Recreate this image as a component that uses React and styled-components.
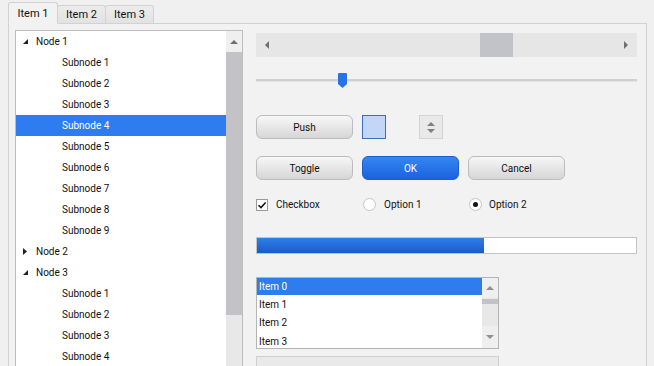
import styled, { createGlobalStyle } from "styled-components";

const GlobalStyle = createGlobalStyle`
  html, body { margin: 0; padding: 0; }
  body {
    font-family: Roboto, "Noto Sans", sans-serif;
    font-size: 10px;
    color: #111;
    background: #f0f0f0;
  }
`;

const Window = styled.div`
  width: 654px;
  height: 366px;
  overflow: hidden;
  background: #f0f0f0;
  padding: 2px 0 0 8px;
  box-sizing: border-box;
`;

const TabBar = styled.div`
  display: flex;
  align-items: flex-end;
  height: 21px;
  position: relative;
  z-index: 1;
`;

const Tab = styled.div`
  height: ${(p) => (p.$active ? "22px" : "18px")};
  width: ${(p) => p.$w}px;
  display: flex;
  align-items: center;
  justify-content: center;
  box-sizing: border-box;
  font-size: 11px;
  border: 1px solid #d2d2d2;
  border-bottom: ${(p) => (p.$active ? "1px solid #f2f2f2" : "none")};
  border-radius: 3px 3px 0 0;
  margin-left: ${(p) => (p.$active ? "0" : "-1px")};
  background: ${(p) =>
    p.$active ? "#f2f2f2" : "linear-gradient(#ececec, #e2e2e2)"};
  margin-bottom: ${(p) => (p.$active ? "-1px" : "0")};
`;

const Pane = styled.div`
  width: 639px;
  height: 400px;
  box-sizing: border-box;
  border: 1px solid #d2d2d2;
  background: #f2f2f2;
  padding: 6px 9px 0 6px;
  display: flex;
  gap: 13px;
`;

const Tree = styled.div`
  width: 228px;
  height: 380px;
  box-sizing: border-box;
  border: 1px solid #bdbdbd;
  background: #fff;
  display: flex;
  overflow: hidden;
`;

const TreeBody = styled.div`
  flex: 1;
  display: flex;
  flex-direction: column;
`;

const TreeRow = styled.div`
  height: 21px;
  flex-shrink: 0;
  display: flex;
  align-items: center;
  padding-left: ${(p) => (p.$child ? "46px" : "4px")};
  background: ${(p) => (p.$selected ? "#2f7bf0" : "transparent")};
  color: ${(p) => (p.$selected ? "#fff" : "#111")};
`;

const Expander = styled.span`
  width: 10px;
  margin-right: 6px;
  display: flex;
  justify-content: center;
`;

const VScroll = styled.div`
  width: 16px;
  display: flex;
  flex-direction: column;
  background: #e8e8e8;
`;

const ArrowCell = styled.div`
  height: ${(p) => p.$h || 21}px;
  flex-shrink: 0;
  display: flex;
  align-items: center;
  justify-content: center;
  background: #efefef;
`;

const VThumb = styled.div`
  height: ${(p) => p.$h}px;
  flex-shrink: 0;
  background: #c3c3c7;
  margin-top: ${(p) => p.$top || 0}px;
`;

const Right = styled.div`
  width: 381px;
  display: flex;
  flex-direction: column;
  padding-top: 3px;
`;

const HScroll = styled.div`
  height: 24px;
  background: #e6e6e6;
  display: flex;
  align-items: stretch;
`;

const HArrow = styled.div`
  width: 22px;
  display: flex;
  align-items: center;
  justify-content: center;
`;

const HTrack = styled.div`
  flex: 1;
  display: flex;
`;

const HThumb = styled.div`
  width: 33px;
  margin-left: 202px;
  background: #c2c3c8;
`;

const Slider = styled.div`
  position: relative;
  height: 14px;
  margin-top: 16px;
  display: flex;
  align-items: center;
`;

const SliderTrack = styled.div`
  flex: 1;
  height: 2px;
  background: #d0d0d0;
  border-bottom: 1px solid #e4e4e4;
`;

const SliderThumb = styled.svg`
  position: absolute;
  left: 82px;
  top: 0;
`;

const Row = styled.div`
  display: flex;
  align-items: center;
  height: ${(p) => p.$h || 24}px;
  gap: ${(p) => p.$gap ?? 9}px;
  margin-top: ${(p) => p.$top}px;
`;

const Button = styled.div`
  width: 97px;
  height: 24px;
  box-sizing: border-box;
  border-radius: 6px;
  display: flex;
  align-items: center;
  justify-content: center;
  border: 1px solid ${(p) => (p.$primary ? "#1f5fcc" : "#bcbcbc")};
  background: ${(p) =>
    p.$primary
      ? "linear-gradient(#3586f5, #1b62dc)"
      : "linear-gradient(#f7f7f7, #d6d6d6)"};
  color: ${(p) => (p.$primary ? "#fff" : "#111")};
`;

const Swatch = styled.div`
  width: 24px;
  height: 24px;
  box-sizing: border-box;
  background: #c3d6f5;
  border: 1px solid #3e6cc2;
`;

const Spinner = styled.div`
  width: 24px;
  height: 24px;
  margin-left: 24px;
  box-sizing: border-box;
  border: 1px solid #d4d4d4;
  background: #e9e9e9;
  display: flex;
  flex-direction: column;
  align-items: center;
  justify-content: center;
  gap: 3px;
`;

const Choice = styled.label`
  display: flex;
  align-items: center;
  gap: ${(p) => p.$gap ?? 8}px;
  width: ${(p) => p.$w}px;
`;

const Box = styled.span`
  width: 12px;
  height: 12px;
  box-sizing: border-box;
  border: 1px solid #9a9a9a;
  background: #fff;
  display: flex;
  align-items: center;
  justify-content: center;
`;

const Radio = styled.span`
  width: 13px;
  height: 13px;
  box-sizing: border-box;
  border-radius: 50%;
  border: 1px solid #c4c4c4;
  background: #fff;
  display: flex;
  align-items: center;
  justify-content: center;
  &::after {
    content: "";
    display: ${(p) => (p.$on ? "block" : "none")};
    width: 5px;
    height: 5px;
    border-radius: 50%;
    background: #111;
  }
`;

const Progress = styled.div`
  height: 17px;
  margin-top: 26px;
  box-sizing: border-box;
  border: 1px solid #c4c4c4;
  background: #fff;
  display: flex;
`;

const ProgressFill = styled.div`
  background: linear-gradient(#2f7ee9, #1a5bc9);
`;

const ListWrap = styled.div`
  width: 243px;
  height: 72px;
  margin-top: 23px;
  box-sizing: border-box;
  border: 1px solid #b4b4b4;
  display: flex;
`;

const ListBody = styled.div`
  flex: 1;
  background: #fff;
  display: flex;
  flex-direction: column;
  overflow: hidden;
`;

const ListItem = styled.div`
  height: ${(p) => (p.$selected ? 17 : 18.5)}px;
  flex-shrink: 0;
  display: flex;
  align-items: center;
  padding-left: 2px;
  background: ${(p) => (p.$selected ? "#2f7bf0" : "transparent")};
  color: ${(p) => (p.$selected ? "#fff" : "#111")};
`;

const ListScroll = styled.div`
  width: 16px;
  background: #e8e8e8;
  display: flex;
  flex-direction: column;
`;

const Filler = styled.div`
  flex: 1;
`;

const Combo = styled.div`
  width: 243px;
  height: 24px;
  margin-top: 7px;
  box-sizing: border-box;
  border: 1px solid #cfcfcf;
  background: #e9e9e9;
`;

const Tri = ({ dir, color = "#6f6f6f", size = 4 }) => {
  const pts = {
    up: `0,${size} ${size},0 ${size * 2},${size}`,
    down: `0,0 ${size * 2},0 ${size},${size}`,
    left: `${size},0 ${size},${size * 2} 0,${size}`,
    right: `0,0 0,${size * 2} ${size},${size}`,
  }[dir];
  const vert = dir === "up" || dir === "down";
  return (
    <svg width={vert ? size * 2 : size} height={vert ? size : size * 2}>
      <polygon points={pts} fill={color} />
    </svg>
  );
};

const ExpandedIcon = () => (
  <svg width="5" height="5">
    <polygon points="5,0 5,5 0,5" fill="#222" />
  </svg>
);

const CollapsedIcon = () => (
  <svg width="4" height="7">
    <polygon points="0,0 4,3.5 0,7" fill="#222" />
  </svg>
);

const Check = () => (
  <svg width="10" height="10" viewBox="0 0 10 10">
    <path d="M1.5 5.2 L4 7.6 L8.6 2.4" stroke="#111" strokeWidth="1.5" fill="none" />
  </svg>
);

const treeRows = [
  { label: "Node 1", open: true },
  ...Array.from({ length: 9 }, (_, i) => ({ label: `Subnode ${i + 1}`, child: true })),
  { label: "Node 2", open: false },
  { label: "Node 3", open: true },
  ...Array.from({ length: 6 }, (_, i) => ({ label: `Subnode ${i + 1}`, child: true })),
];

export default function App() {
  return (
    <>
      <GlobalStyle />
      <Window>
        <TabBar>
          <Tab $active $w={50}>Item 1</Tab>
          <Tab $w={49}>Item 2</Tab>
          <Tab $w={49}>Item 3</Tab>
        </TabBar>
        <Pane>
          <Tree>
            <TreeBody>
              {treeRows.map((r, i) => (
                <TreeRow key={i} $child={r.child} $selected={i === 4}>
                  {!r.child && (
                    <Expander>{r.open ? <ExpandedIcon /> : <CollapsedIcon />}</Expander>
                  )}
                  {r.label}
                </TreeRow>
              ))}
            </TreeBody>
            <VScroll>
              <ArrowCell>
                <Tri dir="up" color="#707070" />
              </ArrowCell>
              <VThumb $h={263} />
            </VScroll>
          </Tree>
          <Right>
            <HScroll>
              <HArrow>
                <Tri dir="left" />
              </HArrow>
              <HTrack>
                <HThumb />
              </HTrack>
              <HArrow>
                <Tri dir="right" />
              </HArrow>
            </HScroll>
            <Slider>
              <SliderTrack />
              <SliderThumb width="9" height="15" viewBox="0 0 9 15">
                <path d="M1 0 H8 Q9 0 9 1 V11 L4.5 15 L0 11 V1 Q0 0 1 0 Z" fill="#2a72e8" />
              </SliderThumb>
            </Slider>
            <Row $top={28}>
              <Button>Push</Button>
              <Swatch />
              <Spinner>
                <Tri dir="up" color="#808080" />
                <Tri dir="down" color="#808080" />
              </Spinner>
            </Row>
            <Row $top={17}>
              <Button>Toggle</Button>
              <Button $primary>OK</Button>
              <Button>Cancel</Button>
            </Row>
            <Row $top={18} $h={13} $gap={0}>
              <Choice $w={107}>
                <Box>
                  <Check />
                </Box>
                Checkbox
              </Choice>
              <Choice $w={106}>
                <Radio />
                Option 1
              </Choice>
              <Choice $gap={7}>
                <Radio $on />
                Option 2
              </Choice>
            </Row>
            <Progress>
              <ProgressFill style={{ width: `${(228 / 381) * 100}%` }} />
            </Progress>
            <ListWrap>
              <ListBody>
                {[0, 1, 2, 3].map((n) => (
                  <ListItem key={n} $selected={n === 0}>
                    Item {n}
                  </ListItem>
                ))}
              </ListBody>
              <ListScroll>
                <ArrowCell $h={20}>
                  <Tri dir="up" color="#909090" />
                </ArrowCell>
                <VThumb $h={5} $top={1} />
                <Filler />
                <ArrowCell $h={22}>
                  <Tri dir="down" color="#909090" />
                </ArrowCell>
              </ListScroll>
            </ListWrap>
            <Combo />
          </Right>
        </Pane>
      </Window>
    </>
  );
}
